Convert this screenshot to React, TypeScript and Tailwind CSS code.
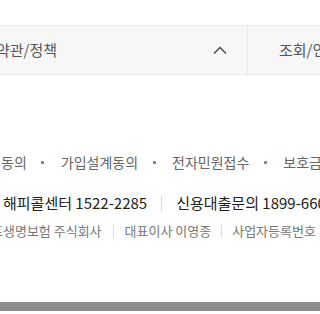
import React from "react";

const font = { fontFamily: '"Noto Sans CJK KR", "Noto Sans", sans-serif' };

function Dot() {
  return (
    <span className="ml-[14px] mr-[16px] flex h-[4px] w-[4px] shrink-0 items-center justify-center">
      <span className="block h-[3px] w-[3px] shrink-0 bg-[#8a8a8a]" />
    </span>
  );
}

export default function App() {
  return (
    <div className="w-[320px] h-[314px] overflow-hidden bg-white" style={font}>
      <div className="h-[25px]" />
      <div className="flex h-[50px] border-y border-[#e8e8e8] bg-[#f7f7f7]">
        <div className="flex w-[248px] shrink-0 items-center justify-between border-r border-[#e8e8e8] pr-[20px]">
          <span className="ml-[-4px] whitespace-nowrap text-[15px] text-[#555]">약관/정책</span>
          <svg width="14" height="8" viewBox="0 0 14 8" fill="none">
            <path d="M1 7.5 L7 1.5 L13 7.5" stroke="#444" strokeWidth="1.3" />
          </svg>
        </div>
        <div className="flex flex-1 items-center pl-[31px]">
          <span className="whitespace-nowrap text-[15px] text-[#555]">조회/인증센터</span>
        </div>
      </div>
      <div className="mt-[76px] flex h-[22px] items-center whitespace-nowrap text-[14px] text-[#666]">
        <span className="ml-[1px]">동의</span>
        <Dot />
        <span>가입설계동의</span>
        <Dot />
        <span>전자민원접수</span>
        <Dot />
        <span>보호금융상품</span>
      </div>
      <div className="mt-[18px] flex h-[24px] items-center whitespace-nowrap text-[15px] text-[#222]">
        <span className="ml-[3px]">해피콜센터 1522-2285</span>
        <span className="mx-[14px] h-[17px] w-px shrink-0 bg-[#ddd]" />
        <span>신용대출문의 1899-6600</span>
      </div>
      <div className="mt-[7px] flex h-[18px] items-center whitespace-nowrap text-[13px] text-[#777]">
        <span className="ml-[-9px]">프생명보험 주식회사</span>
        <span className="mx-[11px] h-[13px] w-px shrink-0 bg-[#ddd]" />
        <span>대표이사 이영종</span>
        <span className="mx-[10px] h-[13px] w-px shrink-0 bg-[#ddd]" />
        <span>사업자등록번호 105-81-00000</span>
      </div>
      <div className="mt-[62px] h-[9px] bg-[#8c8c8c]" />
    </div>
  );
}
